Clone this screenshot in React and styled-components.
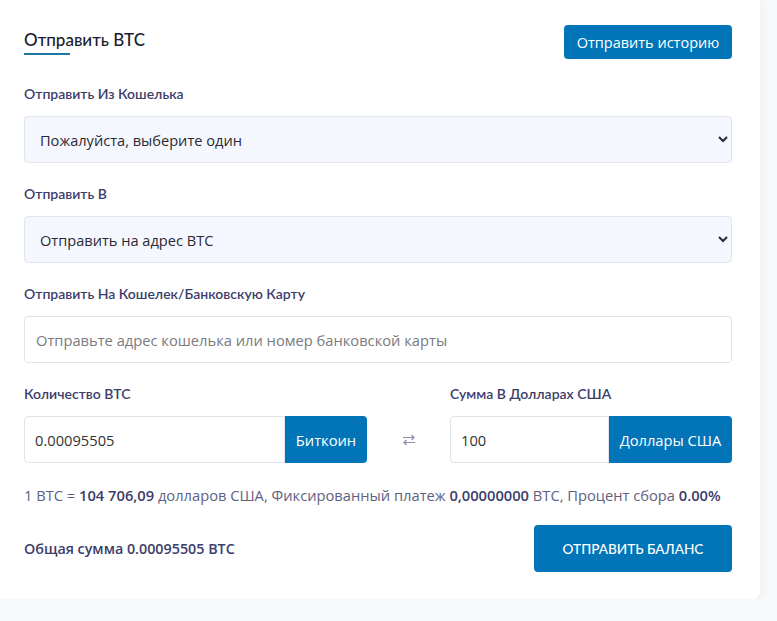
import React from 'react';
import styled, { createGlobalStyle } from 'styled-components';

const GlobalStyle = createGlobalStyle`
    body {
        margin: 0;
        background: #f8f9fa;
        font-family: "Open Sans", "Liberation Sans", sans-serif;
    }
`;

const Card = styled.div`
    width: 760px;
    box-sizing: border-box;
    background: #ffffff;
    border-radius: 0 0 7px 0;
    box-shadow: 0 2px 14px rgba(30, 40, 80, 0.06);
    padding: 25px 28px 27px 24px;
`;

const Header = styled.div`
    display: flex;
    justify-content: space-between;
    align-items: center;
    margin-bottom: 26px;
`;

const Title = styled.h2`
    position: relative;
    margin: 0;
    font-family: Lato, "Noto Sans", sans-serif;
    font-size: 17px;
    font-weight: 500;
    color: #1c1d2e;
    padding-bottom: 5px;

    &::after {
        content: '';
        position: absolute;
        left: 0;
        bottom: 0;
        width: 46px;
        height: 2px;
        background: #1f77a5;
    }
`;

const Button = styled.button`
    background: #0275b8;
    color: #ffffff;
    border: none;
    border-radius: 4px;
    font-family: ${p => (p.caps ? 'Lato, "Noto Sans", sans-serif' : '"Open Sans", sans-serif')};
    font-size: ${p => (p.caps ? '13.6px' : '14.5px')};
    font-weight: ${p => (p.caps ? 500 : 400)};
    text-transform: ${p => (p.caps ? 'uppercase' : 'none')};
    height: ${p => p.h || 34}px;
    width: ${p => p.w}px;
    padding: 0;
    cursor: pointer;
`;

const Field = styled.div`
    display: flex;
    flex-direction: column;
    margin-bottom: ${p => p.mb ?? 22}px;
    flex: ${p => p.flex || 'none'};
`;

const Label = styled.label`
    font-family: Lato, "Noto Sans", sans-serif;
    font-size: 14px;
    font-weight: 600;
    color: #3c3d6b;
    margin-bottom: 13px;
    line-height: 18px;
`;

const Select = styled.select`
    height: 47px;
    width: 100%;
    background-color: #f4f7fd;
    border: 1px solid #e1e5ef;
    border-radius: 4px;
    padding: 0 10px 0 11px;
    font-family: "Open Sans", sans-serif;
    font-size: 14.6px;
    color: #2a2a35;
`;

const Input = styled.input`
    height: 47px;
    box-sizing: border-box;
    width: 100%;
    background: #ffffff;
    border: 1px solid #dfe3ea;
    border-radius: ${p => (p.grouped ? '4px 0 0 4px' : '4px')};
    padding: 0 ${p => (p.grouped ? 10 : 11)}px;
    font-family: "Open Sans", sans-serif;
    font-size: 14.7px;
    color: #333;

    &::placeholder {
        color: #7a7a80;
    }
`;

const Row = styled.div`
    display: flex;
    align-items: flex-end;
`;

const Group = styled.div`
    display: flex;
    width: ${p => p.w}px;
`;

const Addon = styled.span`
    flex: none;
    width: ${p => p.w}px;
    height: 47px;
    display: flex;
    align-items: center;
    justify-content: center;
    background: #0275b8;
    color: #ffffff;
    font-size: 14.7px;
    border-radius: 0 4px 4px 0;
`;

const Swap = styled.div`
    width: 83px;
    height: 47px;
    display: flex;
    align-items: center;
    justify-content: center;
    margin-bottom: 22px;
`;

const Info = styled.p`
    margin: 0 0 20px;
    font-size: 14.7px;
    color: #5e6182;
    white-space: nowrap;

    b {
        font-weight: 600;
        color: #3c3d6b;
    }
`;

const Footer = styled.div`
    display: flex;
    justify-content: space-between;
    align-items: center;
`;

const Total = styled.span`
    font-size: 14.3px;
    font-weight: 600;
    color: #3c3d6b;
`;

const SwapIcon = () => (
    <svg width="14" height="12" viewBox="0 0 14 12" fill="none" stroke="#8a8db0" strokeWidth="1.2">
        <path d="M1 3.5h11M9.5 1l2.5 2.5L9.5 6" />
        <path d="M13 8.5H2M4.5 6L2 8.5 4.5 11" />
    </svg>
);

const App = () => {
    return (
        <>
            <GlobalStyle />
            <Card>
                <Header>
                    <Title>Отправить BTC</Title>
                    <Button w={168}>Отправить историю</Button>
                </Header>

                <Field>
                    <Label>Отправить Из Кошелька</Label>
                    <Select defaultValue="">
                        <option value="">Пожалуйста, выберите один</option>
                    </Select>
                </Field>

                <Field>
                    <Label>Отправить В</Label>
                    <Select defaultValue="btc">
                        <option value="btc">Отправить на адрес BTC</option>
                    </Select>
                </Field>

                <Field>
                    <Label>Отправить На Кошелек/Банковскую Карту</Label>
                    <Input placeholder="Отправьте адрес кошелька или номер банковской карты" />
                </Field>

                <Row>
                    <Field>
                        <Label>Количество BTC</Label>
                        <Group w={343}>
                            <Input grouped defaultValue="0.00095505" />
                            <Addon w={82}>Биткоин</Addon>
                        </Group>
                    </Field>
                    <Swap>
                        <SwapIcon />
                    </Swap>
                    <Field>
                        <Label>Сумма В Долларах США</Label>
                        <Group w={282}>
                            <Input grouped defaultValue="100" />
                            <Addon w={123}>Доллары США</Addon>
                        </Group>
                    </Field>
                </Row>

                <Info>
                    1 BTC = <b>104 706,09</b> долларов США, Фиксированный платеж <b>0,00000000</b> BTC, Процент сбора <b>0.00%</b>
                </Info>

                <Footer>
                    <Total>Общая сумма 0.00095505 BTC</Total>
                    <Button caps w={198} h={47}>Отправить баланс</Button>
                </Footer>
            </Card>
        </>
    );
};

export default App;
